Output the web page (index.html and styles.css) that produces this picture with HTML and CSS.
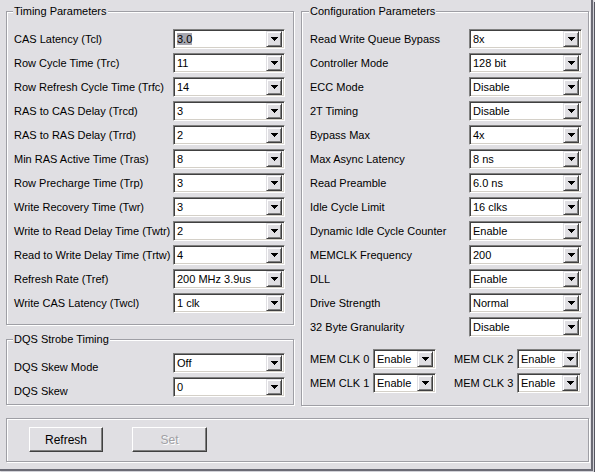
FILE: index.html
```html
<!DOCTYPE html>
<html>
<head>
<meta charset="utf-8">
<link rel="stylesheet" href="styles.css">
</head>
<body>
<div class="window">
  <div class="columns">
    <div class="col">
      <fieldset class="group timing">
        <legend>Timing Parameters</legend>
        <div class="row"><label>CAS Latency (Tcl)</label><div class="combo"><span class="value"><span class="sel">3.0</span></span><span class="dd"></span></div></div>
        <div class="row"><label>Row Cycle Time (Trc)</label><div class="combo"><span class="value">11</span><span class="dd"></span></div></div>
        <div class="row"><label>Row Refresh Cycle Time (Trfc)</label><div class="combo"><span class="value">14</span><span class="dd"></span></div></div>
        <div class="row"><label>RAS to CAS Delay (Trcd)</label><div class="combo"><span class="value">3</span><span class="dd"></span></div></div>
        <div class="row"><label>RAS to RAS Delay (Trrd)</label><div class="combo"><span class="value">2</span><span class="dd"></span></div></div>
        <div class="row"><label>Min RAS Active Time (Tras)</label><div class="combo"><span class="value">8</span><span class="dd"></span></div></div>
        <div class="row"><label>Row Precharge Time (Trp)</label><div class="combo"><span class="value">3</span><span class="dd"></span></div></div>
        <div class="row"><label>Write Recovery Time (Twr)</label><div class="combo"><span class="value">3</span><span class="dd"></span></div></div>
        <div class="row"><label>Write to Read Delay Time (Twtr)</label><div class="combo"><span class="value">2</span><span class="dd"></span></div></div>
        <div class="row"><label>Read to Write Delay Time (Trtw)</label><div class="combo"><span class="value">4</span><span class="dd"></span></div></div>
        <div class="row"><label>Refresh Rate (Tref)</label><div class="combo"><span class="value">200 MHz 3.9us</span><span class="dd"></span></div></div>
        <div class="row"><label>Write CAS Latency (Twcl)</label><div class="combo"><span class="value">1 clk</span><span class="dd"></span></div></div>
      </fieldset>
      <fieldset class="group dqs">
        <legend>DQS Strobe Timing</legend>
        <div class="row"><label class="low">DQS Skew Mode</label><div class="combo"><span class="value">Off</span><span class="dd"></span></div></div>
        <div class="row"><label class="low">DQS Skew</label><div class="combo"><span class="value">0</span><span class="dd"></span></div></div>
      </fieldset>
    </div>
    <fieldset class="group config">
      <legend>Configuration Parameters</legend>
      <div class="row"><label>Read Write Queue Bypass</label><div class="combo"><span class="value">8x</span><span class="dd"></span></div></div>
      <div class="row"><label>Controller Mode</label><div class="combo"><span class="value">128 bit</span><span class="dd"></span></div></div>
      <div class="row"><label>ECC Mode</label><div class="combo"><span class="value">Disable</span><span class="dd"></span></div></div>
      <div class="row"><label>2T Timing</label><div class="combo"><span class="value">Disable</span><span class="dd"></span></div></div>
      <div class="row"><label>Bypass Max</label><div class="combo"><span class="value">4x</span><span class="dd"></span></div></div>
      <div class="row"><label>Max Async Latency</label><div class="combo"><span class="value">8 ns</span><span class="dd"></span></div></div>
      <div class="row"><label>Read Preamble</label><div class="combo"><span class="value">6.0 ns</span><span class="dd"></span></div></div>
      <div class="row"><label>Idle Cycle Limit</label><div class="combo"><span class="value">16 clks</span><span class="dd"></span></div></div>
      <div class="row"><label>Dynamic Idle Cycle Counter</label><div class="combo"><span class="value">Enable</span><span class="dd"></span></div></div>
      <div class="row"><label>MEMCLK Frequency</label><div class="combo"><span class="value">200</span><span class="dd"></span></div></div>
      <div class="row"><label>DLL</label><div class="combo"><span class="value">Enable</span><span class="dd"></span></div></div>
      <div class="row"><label>Drive Strength</label><div class="combo"><span class="value">Normal</span><span class="dd"></span></div></div>
      <div class="row"><label>32 Byte Granularity</label><div class="combo"><span class="value">Disable</span><span class="dd"></span></div></div>
      <div class="mem">
        <div class="memrow"><label>MEM CLK 0</label><div class="combo small"><span class="value">Enable</span><span class="dd"></span></div><label class="second">MEM CLK 2</label><div class="combo small wide"><span class="value">Enable</span><span class="dd"></span></div></div>
        <div class="memrow"><label>MEM CLK 1</label><div class="combo small"><span class="value">Enable</span><span class="dd"></span></div><label class="second">MEM CLK 3</label><div class="combo small wide"><span class="value">Enable</span><span class="dd"></span></div></div>
      </div>
    </fieldset>
  </div>
  <div class="actions">
    <button class="btn">Refresh</button>
    <button class="btn set" disabled>Set</button>
  </div>
</div>
</body>
</html>
```
FILE: styles.css
```css
html, body {
  margin: 0;
  padding: 0;
}
body {
  background: #e0dfe3;
  font-family: "Liberation Sans", Arial, sans-serif;
  font-size: 11px;
  color: #000;
  width: 595px;
  height: 472px;
  overflow: hidden;
}
.window {
  box-sizing: border-box;
  width: 593px;
  height: 471px;
  padding: 4px 0 0 6px;
  border-right: 2px solid #6b6b75;
  border-bottom: 2px solid #6b6b75;
  box-shadow: 1px 1px 0 #d2d2d8, 2px 2px 0 #55555f;
}
.columns {
  display: flex;
  gap: 7px;
  align-items: flex-start;
}
.col {
  width: 288px;
  display: flex;
  flex-direction: column;
}
.group {
  box-sizing: border-box;
  margin: 0;
  min-width: 0;
  border: 1px solid #9f9fa5;
  box-shadow: inset 1px 1px 0 #fff, 1px 1px 0 #fff;
}
.group legend {
  margin-left: -1px;
  padding: 0 1px;
  height: 14px;
  line-height: 14px;
  background: #e0dfe3;
}
.timing {
  width: 288px;
  padding: 9px 8px 9px 7px;
}
.dqs {
  width: 288px;
  margin-top: 7px;
  padding: 5px 8px 5px 7px;
}
.config {
  width: 288px;
  padding: 9px 6px 10px 8px;
}
.row {
  display: flex;
  align-items: center;
  height: 24px;
}
.row label {
  flex: 1;
  white-space: nowrap;
}
.row label.low {
  padding-top: 8px;
}
.combo {
  box-sizing: border-box;
  width: 112px;
  height: 20px;
  display: flex;
  align-items: center;
  background: #fff;
  border: 1px solid;
  border-color: #808080 #fff #fff #808080;
  box-shadow: inset 1px 1px 0 #404040, inset -1px -1px 0 #d4d0c8;
  padding: 2px;
}
.config .combo {
  width: 113px;
}
.value {
  flex: 1;
  padding-left: 1px;
  white-space: nowrap;
  overflow: hidden;
  line-height: 14px;
}
.sel {
  background: #a7a7b0;
}
.dd {
  box-sizing: border-box;
  width: 16px;
  height: 16px;
  flex: none;
  background: #e0dfe3;
  border: 1px solid;
  border-color: #e0dfe3 #404040 #404040 #e0dfe3;
  box-shadow: inset 1px 1px 0 #fff, inset -1px -1px 0 #808080;
  display: flex;
  align-items: center;
  justify-content: center;
}
.dd::after {
  content: "";
  width: 7px;
  height: 4px;
  background:
    linear-gradient(#000, #000) 0 0 / 7px 1px no-repeat,
    linear-gradient(#000, #000) 1px 1px / 5px 1px no-repeat,
    linear-gradient(#000, #000) 2px 2px / 3px 1px no-repeat,
    linear-gradient(#000, #000) 3px 3px / 1px 1px no-repeat;
}
.mem {
  margin-top: 8px;
}
.memrow {
  display: flex;
  align-items: center;
  height: 24px;
}
.memrow label {
  width: 63px;
  white-space: nowrap;
}
.memrow label.second {
  margin-left: 18px;
}
.config .combo.small {
  width: 63px;
}
.config .combo.small.wide {
  width: 64px;
}
.actions {
  box-sizing: border-box;
  width: 583px;
  height: 44px;
  margin-top: 12px;
  border: 1px solid #9f9fa5;
  box-shadow: inset 1px 1px 0 #fff, 1px 1px 0 #fff;
  padding: 8px 0 0 22px;
  display: flex;
  gap: 29px;
  align-items: flex-start;
}
.btn {
  box-sizing: border-box;
  width: 74px;
  height: 25px;
  margin: 0;
  padding: 0;
  font-family: inherit;
  font-size: 12px;
  color: #000;
  background: #e0dfe3;
  border: 1px solid;
  border-color: #fff #404040 #404040 #fff;
  box-shadow: inset -1px -1px 0 #808080;
}
.btn.set {
  width: 75px;
  color: #a0a0a4;
  text-shadow: 1px 1px 0 #fff;
}
```
